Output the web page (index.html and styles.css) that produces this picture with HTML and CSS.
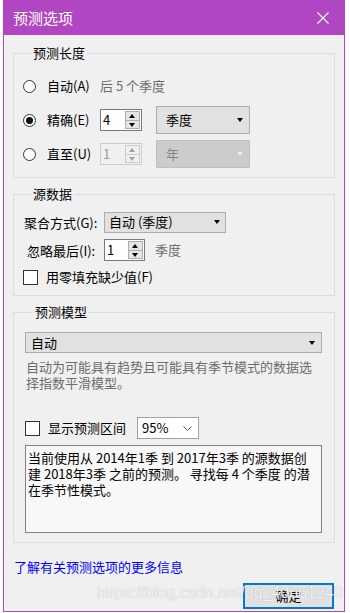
FILE: index.html
```html
<!DOCTYPE html>
<html lang="zh-CN">
<head>
<meta charset="utf-8">
<title>预测选项</title>
<link rel="stylesheet" href="styles.css">
</head>
<body>
<div class="dialog">
  <div class="titlebar">
    <span class="title">预测选项</span>
    <svg class="close" width="12" height="12" viewBox="0 0 12 12"><path d="M0.5 0.5 L11.5 11.5 M11.5 0.5 L0.5 11.5" stroke="#fff" stroke-width="1.1" fill="none"/></svg>
  </div>
  <div class="body">
    <fieldset class="group g1">
      <legend>预测长度</legend>
      <div class="row">
        <span class="radio"></span>
        <span class="opt-label">自动(A)</span>
        <span class="hint">后 5 个季度</span>
      </div>
      <div class="row">
        <span class="radio checked"></span>
        <span class="opt-label">精确(E)</span>
        <div class="spin"><span class="spin-val">4</span><span class="spin-btns"><span class="sb up"></span><span class="sb down"></span></span></div>
        <div class="select sel-unit"><span>季度</span><span class="arrow"></span></div>
      </div>
      <div class="row">
        <span class="radio"></span>
        <span class="opt-label">直至(U)</span>
        <div class="spin disabled"><span class="spin-val">1</span><span class="spin-btns"><span class="sb up"></span><span class="sb down"></span></span></div>
        <div class="select sel-unit disabled"><span>年</span><span class="arrow"></span></div>
      </div>
    </fieldset>

    <fieldset class="group g2">
      <legend>源数据</legend>
      <div class="row r-agg">
        <span class="field-label">聚合方式(G):</span>
        <div class="select sel-agg"><span>自动 (季度)</span><span class="arrow"></span></div>
      </div>
      <div class="row r-ign">
        <span class="field-label ign">忽略最后(I):</span>
        <div class="spin spin-ign"><span class="spin-val">1</span><span class="spin-btns"><span class="sb up"></span><span class="sb down"></span></span></div>
        <span class="hint unit">季度</span>
      </div>
      <div class="row r-fill">
        <span class="check"></span>
        <span class="check-label">用零填充缺少值(F)</span>
      </div>
    </fieldset>

    <fieldset class="group g3">
      <legend>预测模型</legend>
      <div class="select sel-model"><span>自动</span><span class="arrow"></span></div>
      <p class="desc">自动为可能具有趋势且可能具有季节模式的数据选择指数平滑模型。</p>
      <div class="row r-ci">
        <span class="check"></span>
        <span class="check-label ci">显示预测区间</span>
        <div class="select sel-ci"><span>95%</span><svg class="chev" width="9" height="5" viewBox="0 0 9 5"><path d="M0.5 0.5 L4.5 4.5 L8.5 0.5" stroke="#555" stroke-width="1" fill="none"/></svg></div>
      </div>
      <div class="summary">
        <span class="line">当前使用从 2014年1季 到 2017年3季 的源数据创</span>
        <span class="line">建 2018年3季 之前的预测。 寻找每 4 个季度 的潜</span>
        <span class="line">在季节性模式。</span>
      </div>
    </fieldset>

    <a class="link" href="#">了解有关预测选项的更多信息</a>
    <div class="actions"><button class="btn-ok" type="button">确定</button></div>
  </div>
</div>
<div class="watermark">https://blog.csdn.net/qq_40661240</div>
</body>
</html>
```

FILE: styles.css
```css
html, body {
  margin: 0;
  padding: 0;
}
body {
  background: #ffffff;
  font-family: "Noto Sans CJK SC", "Noto Sans", sans-serif;
  font-size: 13px;
  color: #000;
  position: relative;
  width: 350px;
  height: 613px;
  overflow: hidden;
}

.dialog {
  margin-left: 3px;
  width: 342px;
  height: 612px;
  box-sizing: border-box;
  border: 1px solid #b146c2;
  border-top: 0;
  background: #f0f0f0;
  display: flex;
  flex-direction: column;
}

.titlebar {
  height: 35px;
  margin: 0 -1px;
  background: #b146c2;
  color: #fff;
  display: flex;
  align-items: center;
  justify-content: space-between;
  padding: 0 16px 0 10px;
}
.title {
  font-size: 15px;
  line-height: 18px;
  padding-top: 1px;
}
.close {
  display: block;
  margin-top: 1px;
}

.body {
  padding: 10px 9px 0 9px;
  display: flex;
  flex-direction: column;
}

.group {
  margin: 0 0 8px 0;
  padding: 0;
  border: 1px solid #dcdcdc;
  min-width: 0;
}
.group legend {
  margin-left: 8px;
  padding: 0 2px;
  font-size: 13px;
  line-height: 16px;
}

.row {
  display: flex;
  align-items: center;
}

/* Group 1 */
.g1 {
  padding: 8px 0 6px 9px;
}
.g1 .row {
  height: 34px;
}
.radio {
  width: 13px;
  height: 13px;
  box-sizing: border-box;
  border: 1px solid #333;
  border-radius: 50%;
  background: #fff;
  margin-right: 11px;
  position: relative;
  flex: none;
}
.radio.checked::after {
  content: "";
  position: absolute;
  left: 2px;
  top: 2px;
  width: 7px;
  height: 7px;
  border-radius: 50%;
  background: #111;
}
.opt-label {
  width: 53px;
  flex: none;
  line-height: 16px;
}
.hint {
  color: #6d6d6d;
  line-height: 16px;
}

/* Spinner */
.spin {
  width: 42px;
  height: 22px;
  box-sizing: border-box;
  border: 1px solid #7a7a7a;
  background: #fff;
  display: flex;
  flex: none;
}
.spin-val {
  flex: 1;
  padding-left: 2px;
  line-height: 20px;
}
.spin-btns {
  width: 15px;
  display: flex;
  flex-direction: column;
  padding: 1px 1px 1px 0;
  gap: 0;
}
.sb {
  flex: 1;
  border: 1px solid #adadad;
  background: #e5e5e5;
  position: relative;
}
.sb.up {
  border-bottom: 0;
}
.sb::after {
  content: "";
  position: absolute;
  left: 3px;
  width: 0;
  height: 0;
  border-left: 3.5px solid transparent;
  border-right: 3.5px solid transparent;
}
.sb.up::after {
  top: 2px;
  border-bottom: 4px solid #000;
}
.sb.down::after {
  top: 2px;
  border-top: 4px solid #000;
}
.spin.disabled {
  border-color: #cccccc;
  background: #f0f0f0;
  color: #9a9a9a;
}
.spin.disabled .sb {
  border-color: #cccccc;
  background: #f0f0f0;
}
.spin.disabled .sb.up::after {
  border-bottom-color: #a0a0a0;
}
.spin.disabled .sb.down::after {
  border-top-color: #a0a0a0;
}

/* Select */
.select {
  box-sizing: border-box;
  border: 1px solid #adadad;
  background: #e1e1e1;
  display: flex;
  align-items: center;
  justify-content: space-between;
  padding: 0 5px 0 4px;
  line-height: 16px;
  flex: none;
}
.arrow {
  width: 0;
  height: 0;
  border-left: 3.5px solid transparent;
  border-right: 3.5px solid transparent;
  border-top: 4px solid #000;
}
.sel-unit {
  width: 94px;
  height: 28px;
  margin-left: 14px;
  padding: 0 6px 0 9px;
}
.select.disabled {
  background: #cccccc;
  border-color: #bfbfbf;
  color: #838383;
}
.select.disabled .arrow {
  border-top-color: #ececec;
}

/* Group 2 */
.g2 {
  padding: 6px 0 5px 9px;
}
.r-agg,
.r-ign {
  height: 28px;
}
.r-fill {
  height: 26px;
}
.field-label {
  width: 80px;
  margin-left: 1px;
  flex: none;
}
.field-label.ign {
  width: 77px;
  margin-left: 4px;
}
.sel-agg {
  width: 122px;
  height: 21px;
}
.spin-ign {
  width: 41px;
}
.hint.unit {
  margin-left: 10px;
}
.check {
  width: 15px;
  height: 15px;
  box-sizing: border-box;
  border: 1px solid #333;
  background: #fff;
  flex: none;
  margin-right: 8px;
}
.check-label {
  line-height: 16px;
}

/* Group 3 */
.g3 {
  padding: 12px 11px 9px 11px;
}
.sel-model {
  width: 297px;
  height: 21px;
  padding-left: 5px;
  padding-right: 6px;
}
.desc {
  margin: 6px 0 0 1px;
  color: #6d6d6d;
  line-height: 16px;
}
.r-ci {
  margin-top: 26px;
  height: 22px;
}
.check-label.ci {
  width: 89px;
  flex: none;
}
.sel-ci {
  width: 62px;
  height: 22px;
  background: #fff;
  border-color: #a0a0a0;
  padding: 0 6px 0 4px;
}
.chev {
  display: block;
}
.summary {
  margin-top: 6px;
  width: 297px;
  height: 88px;
  box-sizing: border-box;
  border: 1px solid #828282;
  background: #f8f8f8;
  padding: 4px 2px;
}
.summary .line {
  display: block;
  white-space: nowrap;
  line-height: 16px;
}

/* Footer */
.link {
  margin-top: 8px;
  margin-left: 1px;
  color: #0000ff;
  text-decoration: none;
  line-height: 16px;
  align-self: flex-start;
}
.actions {
  display: flex;
  justify-content: flex-end;
  margin-top: 8px;
  padding-right: 1px;
}
.btn-ok {
  width: 91px;
  height: 26px;
  box-sizing: border-box;
  border: 2px solid #0078d7;
  background: #e1e1e1;
  font-family: "Noto Sans CJK SC", sans-serif;
  font-size: 13px;
  color: #000;
  padding: 0;
  line-height: 20px;
}

.watermark {
  position: absolute;
  left: 97px;
  top: 584px;
  font-family: "Liberation Sans", Arial, sans-serif;
  font-size: 16px;
  line-height: 18px;
  color: rgba(255, 255, 255, 0.85);
  text-shadow: 0 0 1px rgba(120, 120, 120, 0.6);
  pointer-events: none;
  white-space: nowrap;
}
```
